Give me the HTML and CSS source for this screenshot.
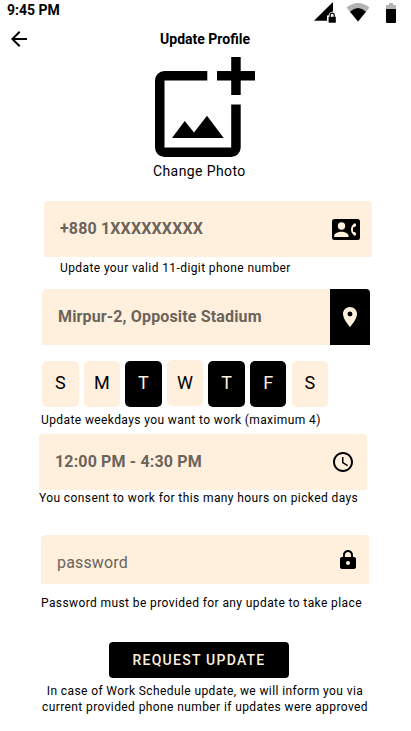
FILE: index.html
```
<!DOCTYPE html>
<html lang="en">
<head>
<meta charset="utf-8">
<title>Update Profile</title>
<link rel="stylesheet" href="styles.css">
</head>
<body>
<div class="status">
  <span class="time">9:45 PM</span>
  <svg class="status-icons" width="84" height="24" viewBox="0 0 84 24">
    <path d="M0 20.700L19 2V11.500Q15 12 14.400 15.500H13V20.700Z"/>
    <path d="M14.600 16.800H21.800V22.700H14.600Z"/>
    <path d="M16.200 17V15.200a2 2 0 0 1 4 0V17" fill="none" stroke="#000" stroke-width="1.200"/>
    <path d="M32.500 7.600Q44-1.600 55.500 7.600L44 21.500Z" fill="#b3b3b3"/>
    <path d="M36 11.700Q44 4.500 52 11.700L44 21.500Z"/>
    <path d="M72 9V5h3V3h4v2h3v4Z" fill="#b3b3b3"/>
    <path d="M72 9h10v13q0 1-1 1h-8q-1 0-1-1Z"/>
  </svg>
</div>
<header class="bar">
  <svg class="back" width="24" height="24" viewBox="0 0 24 24"><path d="M20 11H7.830l5.590-5.590L12 4l-8 8 8 8 1.410-1.410L7.830 13H20z"/></svg>
  <h1>Update Profile</h1>
</header>
<main>
  <div class="photo">
    <svg width="100" height="100" viewBox="0 0 100 100">
      <path d="M52.300 14H9.500A9.500 9.500 0 0 0 0 23.500v67A9.500 9.500 0 0 0 9.500 100h66.700a9.500 9.500 0 0 0 9.500-9.500V47.500h-9.500v43H9.500v-67h42.800z"/>
      <path d="M76.200 0h9.500v14H100v9.500H85.700V38h-9.500V23.500H62V14h14.200zM17 81l12.700-17L39 75.500 52 58.700 68.700 81z"/>
    </svg>
    <span>Change Photo</span>
  </div>

  <div class="field phone">
    <b>+880 1XXXXXXXXX</b>
    <svg class="contact" width="28" height="21" viewBox="0 0 28 21">
      <rect width="28" height="21" rx="2.500"/>
      <g fill="#fff0de"><circle cx="9.500" cy="7" r="3.700"/><path d="M2.200 18v-1.200c0-2.600 4.900-4 7.300-4s7 1.400 7 4V18zM23.300 4.200l-1.200.2c-2.300 2-3.100 4.100-3.100 6.100s.8 4.100 3.100 6.100l1.200.2 1-1.900-1.300-2h-1.600c-.6-1.500-.6-3.300 0-4.800h1.600l1.300-2z"/></g>
    </svg>
  </div>
  <p class="hint phone-hint">Update your valid 11-digit phone number</p>

  <div class="field place">
    <b>Mirpur-2, Opposite Stadium</b>
    <span class="pin"><svg width="24" height="24" viewBox="0 0 24 24"><path fill="#fff0de" d="M12 2C8.130 2 5 5.130 5 9c0 5.250 7 13 7 13s7-7.750 7-13c0-3.870-3.130-7-7-7zm0 9.500a2.500 2.500 0 0 1 0-5 2.500 2.500 0 0 1 0 5z"/></svg></span>
  </div>

  <div class="days">
    <span class="day">S</span><span class="day">M</span><span class="day on">T</span><span class="day raised">W</span><span class="day on">T</span><span class="day on">F</span><span class="day">S</span>
  </div>
  <p class="hint days-hint">Update weekdays you want to work (maximum 4)</p>

  <div class="field hours">
    <b>12:00 PM - 4:30 PM</b>
    <svg width="24" height="24" viewBox="0 0 24 24"><path d="M11.990 2C6.470 2 2 6.480 2 12s4.470 10 9.990 10C17.520 22 22 17.520 22 12S17.520 2 11.990 2zM12 20c-4.420 0-8-3.580-8-8s3.580-8 8-8 8 3.580 8 8-3.580 8-8 8zm.5-13H11v6l5.250 3.150.75-1.230-4.500-2.670z"/></svg>
  </div>
  <p class="hint hours-hint">You consent to work for this many hours on picked days</p>

  <div class="field password">
    <span class="placeholder">password</span>
    <svg class="lock" width="24" height="24" viewBox="0 0 24 24"><path d="M18 8h-1V6c0-2.760-2.240-5-5-5S7 3.240 7 6v2H6c-1.100 0-2 .9-2 2v8c0 1.100.9 2 2 2h12c1.100 0 2-.9 2-2v-8c0-1.100-.9-2-2-2zm-6 8c-1.100 0-2-.9-2-2s.9-2 2-2 2 .9 2 2-.9 2-2 2zm3.100-8H8.900V6c0-1.710 1.390-3.100 3.100-3.100s3.100 1.390 3.100 3.100z"/></svg>
  </div>
  <p class="hint password-hint">Password must be provided for any update to take place</p>

  <button class="submit" type="button">REQUEST UPDATE</button>
  <p class="hint note">In case of Work Schedule update, we will inform you via<br>current provided phone number if updates were approved</p>
</main>
</body>
</html>
```
FILE: styles.css
```
* { box-sizing: border-box; }
body {
  margin: 0;
  width: 411px;
  height: 731px;
  overflow: hidden;
  background: #fff;
  color: #000;
  font-family: Roboto, sans-serif;
}
svg { display: block; flex: none; }
.status {
  display: flex;
  justify-content: space-between;
  height: 24px;
  padding: 0 13px 0 7px;
}
.time { font-size: 14px; font-weight: 700; line-height: 21px; }
.bar {
  display: grid;
  grid-template-columns: 24px 1fr 24px;
  align-items: center;
  height: 30px;
  padding: 0 8px 0 7px;
}
.bar h1 {
  margin: 0;
  font-size: 14px;
  font-weight: 700;
  line-height: 20px;
  text-align: center;
}
main { display: flex; flex-direction: column; align-items: flex-start; }
.photo {
  display: flex;
  flex-direction: column;
  align-items: flex-start;
  margin: 3px 0 0 155px;
}
.photo span {
  margin: 4px 0 1px -2px;
  font-size: 14px;
  line-height: 20px;
  letter-spacing: 0.4px;
}
.field {
  display: flex;
  align-items: center;
  justify-content: space-between;
  width: 328px;
  height: 56px;
  padding: 0 12px 0 16px;
  border-radius: 4px 4px 0 0;
  background: #fff0de;
  color: #6b645b;
  font-size: 16px;
  letter-spacing: 0.15px;
  overflow: hidden;
}
.field b { padding-bottom: 2px; font-weight: 700; }
.hint {
  margin: 0;
  font-size: 12px;
  line-height: 16px;
  letter-spacing: 0.4px;
  white-space: nowrap;
}
.phone { margin: 19px 0 0 44px; }
.phone-hint { margin: 3px 0 0 60px; }
.place { margin: 13px 0 0 42px; padding-right: 0; }
.pin {
  display: flex;
  align-items: center;
  justify-content: center;
  width: 40px;
  height: 56px;
  background: #000;
}
.days { display: flex; gap: 5.100px; margin: 16px 0 0 42px; }
.day {
  width: 36.500px;
  height: 46px;
  border-radius: 5px;
  background: #fff0de;
  font-size: 18px;
  line-height: 44px;
  text-align: center;
}
.on { background: #000; color: #fff0de; }
.raised { margin-top: -1px; line-height: 46px; }
.days-hint { margin: 5px 0 0 41px; }
.hours { margin: 6px 0 0 39px; }
.hours-hint { margin-left: 39px; }
.password { height: 49px; margin: 29px 0 0 41px; padding-right: 9px; }
.placeholder { padding-top: 6px; }
.lock { margin-top: 2px; }
.password-hint { margin: 11px 0 0 41px; }
.submit {
  width: 180px;
  height: 36px;
  margin: 31px 0 0 109px;
  padding: 0;
  border: 0;
  border-radius: 4px;
  background: #000;
  color: #fff0de;
  font: 500 14px/36px Roboto, sans-serif;
  letter-spacing: 1.250px;
}
.note { margin: 5px 0 0 42px; text-align: center; }
```
